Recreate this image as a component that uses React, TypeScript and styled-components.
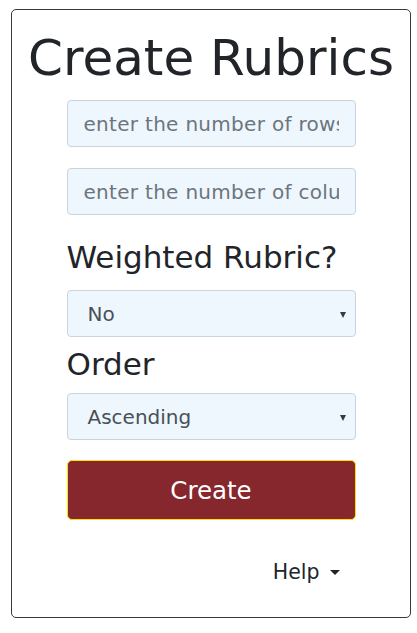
import React from "react";
import styled, { createGlobalStyle } from "styled-components";

const Global = createGlobalStyle`
  html, body { margin: 0; padding: 0; background: #ffffff; }
  body { font-family: "DejaVu Sans", "Open Sans", sans-serif; color: #212529; }
  * { box-sizing: border-box; }
`;

const Card = styled.div`
  margin: 9px 0 0 11px;
  width: 400px;
  height: 609px;
  border: 1px solid #3a3a3a;
  border-radius: 5px;
  padding: 15px 0 0 0;
  display: flex;
  flex-direction: column;
  align-items: center;
`;

const Title = styled.h1`
  margin: 0;
  font-weight: 400;
  font-size: 50px;
  line-height: 67px;
  height: 67px;
  color: #212529;
  white-space: nowrap;
  text-align: center;
`;

const Form = styled.div`
  width: 289px;
  display: flex;
  flex-direction: column;
  margin-top: 8px;
`;

const Field = styled.input<{ $mt?: number }>`
  display: block;
  width: 100%;
  height: 47px;
  margin: ${(p) => p.$mt ?? 0}px 0 0 0;
  padding: 0 16px;
  font-family: inherit;
  font-size: 20px;
  letter-spacing: 0.3px;
  color: #495057;
  background: #eef7fd;
  border: 1px solid #c9d4de;
  border-radius: 4px;
  outline: none;
  &::placeholder { color: #6c757d; opacity: 1; }
`;

const Label = styled.div<{ $mt: number }>`
  margin-top: ${(p) => p.$mt}px;
  font-size: 31px;
  line-height: 40px;
  height: 40px;
  color: #212529;
`;

const SelectBox = styled.div<{ $mt: number }>`
  position: relative;
  margin-top: ${(p) => p.$mt}px;
  height: 47px;
  background: #eef7fd;
  border: 1px solid #c9d4de;
  border-radius: 4px;
  display: flex;
  align-items: center;
  padding-left: 20px;
  font-size: 20px;
  color: #495057;
`;

const Arrow = styled.span`
  position: absolute;
  right: 9px;
  top: 50%;
  margin-top: -2px;
  width: 0;
  height: 0;
  border-left: 3.5px solid transparent;
  border-right: 3.5px solid transparent;
  border-top: 6px solid #343a40;
`;

const Button = styled.button`
  margin-top: 20px;
  height: 60px;
  width: 100%;
  background: #86272d;
  border: 1px solid #ffe100;
  border-radius: 5px;
  color: #ffffff;
  font-family: inherit;
  font-size: 24.5px;
  cursor: pointer;
`;

const HelpRow = styled.div`
  margin-top: 38px;
  display: flex;
  justify-content: flex-end;
  padding-right: 16px;
`;

const HelpToggle = styled.span`
  display: inline-flex;
  align-items: center;
  font-size: 20.5px;
  line-height: 28px;
  color: #212529;
  &::after {
    content: "";
    display: inline-block;
    margin-left: 10px;
    width: 0;
    height: 0;
    border-left: 5.5px solid transparent;
    border-right: 5.5px solid transparent;
    border-top: 5.5px solid #212529;
  }
`;

const Select = ({ value, mt }: { value: string; mt: number }) => (
  <SelectBox $mt={mt}>
    {value}
    <Arrow />
  </SelectBox>
);

export default function App() {
  return (
    <>
      <Global />
      <Card>
        <Title>Create Rubrics</Title>
        <Form>
          <Field placeholder="enter the number of rows" />
          <Field $mt={21} placeholder="enter the number of columns" />
          <Label $mt={22}>Weighted Rubric?</Label>
          <Select value="No" mt={13} />
          <Label $mt={7}>Order</Label>
          <Select value="Ascending" mt={9} />
          <Button>Create</Button>
          <HelpRow>
            <HelpToggle>Help</HelpToggle>
          </HelpRow>
        </Form>
      </Card>
    </>
  );
}
